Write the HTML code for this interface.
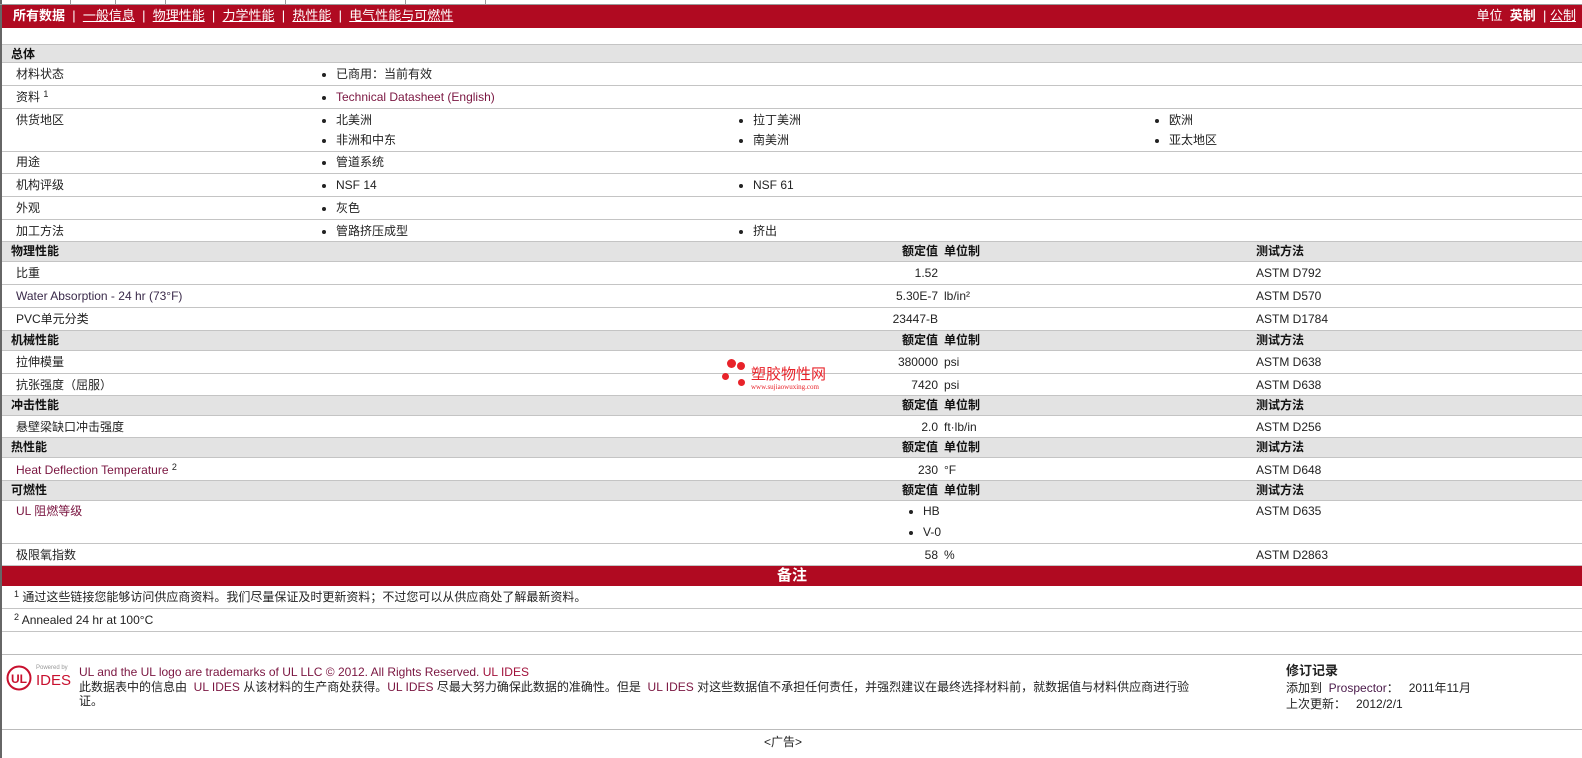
<!DOCTYPE html>
<html><head><meta charset="utf-8"><style>
*{margin:0;padding:0;box-sizing:border-box}
body{width:1582px;height:758px;background:#fff;position:relative;overflow:hidden;font:12px "Liberation Sans","Noto Sans CJK SC",sans-serif;color:#222}
.a{position:absolute}
.r{position:absolute;left:2px;right:0;border-bottom:1px solid #c4c4c4}
.h{background:#e3e3e3;font-weight:bold;color:#111}
.t{position:absolute;white-space:nowrap;line-height:14px}
.b::before{content:"";position:absolute;left:-14px;top:6px;width:4px;height:4px;border-radius:50%;background:#222}
.lk{color:#7a1540}
.v{position:absolute;right:644px;text-align:right;white-space:nowrap;line-height:14px}
sup{font-size:9px;vertical-align:top;position:relative;top:-3px}
</style></head><body>
<div class="a" style="left:0;top:0;width:2px;height:758px;background:#666"></div>
<div class="a" style="left:0;top:0;width:1582px;height:5px;border-bottom:1px solid #999"></div>
<div class="a" style="left:70px;top:0;width:1px;height:5px;background:#999"></div>
<div class="a" style="left:115px;top:0;width:1px;height:5px;background:#999"></div>
<div class="a" style="left:165px;top:0;width:1px;height:5px;background:#999"></div>
<div class="a" style="left:285px;top:0;width:1px;height:5px;background:#999"></div>
<div class="a" style="left:405px;top:0;width:1px;height:5px;background:#999"></div>
<div class="a" style="left:485px;top:0;width:1px;height:5px;background:#999"></div>
<div class="a" style="left:2px;top:5px;right:0;height:23px;background:#b00a21;color:#fff;font-size:13px">
<span class="t" style="left:11px;top:4px"><b>所有数据</b> &nbsp;| &nbsp;<u>一般信息</u> &nbsp;| &nbsp;<u>物理性能</u> &nbsp;| &nbsp;<u>力学性能</u> &nbsp;| &nbsp;<u>热性能</u> &nbsp;| &nbsp;<u>电气性能与可燃性</u></span>
<span class="t" style="right:6px;top:4px">单位 &nbsp;<b>英制</b> &nbsp;| <u>公制</u></span></div>

<div class="r h" style="top:44px;height:19px;border-top:1px solid #c4c4c4"><span class="t" style="left:9px;top:2px">总体</span></div>
<div class="r" style="top:63px;height:23px"><span class="t" style="left:14px;top:4px">材料状态</span><span class="t b" style="left:334px;top:4px">已商用：当前有效</span></div>
<div class="r" style="top:86px;height:23px"><span class="t" style="left:14px;top:4px">资料 <sup>1</sup></span><span class="t b lk" style="left:334px;top:4px">Technical Datasheet (English)</span></div>
<div class="r" style="top:109px;height:43px"><span class="t" style="left:14px;top:4px">供货地区</span>
<span class="t b" style="left:334px;top:4px">北美洲</span><span class="t b" style="left:751px;top:4px">拉丁美洲</span><span class="t b" style="left:1167px;top:4px">欧洲</span>
<span class="t b" style="left:334px;top:24px">非洲和中东</span><span class="t b" style="left:751px;top:24px">南美洲</span><span class="t b" style="left:1167px;top:24px">亚太地区</span></div>
<div class="r" style="top:152px;height:22px"><span class="t" style="left:14px;top:3px">用途</span><span class="t b" style="left:334px;top:3px">管道系统</span></div>
<div class="r" style="top:174px;height:23px"><span class="t" style="left:14px;top:4px">机构评级</span><span class="t b" style="left:334px;top:4px">NSF 14</span><span class="t b" style="left:751px;top:4px">NSF 61</span></div>
<div class="r" style="top:197px;height:23px"><span class="t" style="left:14px;top:4px">外观</span><span class="t b" style="left:334px;top:4px">灰色</span></div>
<div class="r" style="top:220px;height:22px"><span class="t" style="left:14px;top:4px">加工方法</span><span class="t b" style="left:334px;top:4px">管路挤压成型</span><span class="t b" style="left:751px;top:4px">挤出</span></div>

<div class="r h" style="top:242px;height:20px"><span class="t" style="left:9px;top:2px">物理性能</span><span class="v" style="top:2px">额定值</span><span class="t" style="left:942px;top:2px">单位制</span><span class="t" style="left:1254px;top:2px">测试方法</span></div>
<div class="r" style="top:262px;height:23px"><span class="t" style="left:14px;top:4px">比重</span><span class="v" style="top:4px">1.52</span><span class="t" style="left:1254px;top:4px">ASTM D792</span></div>
<div class="r" style="top:285px;height:23px"><span class="t" style="left:14px;top:4px;color:#3a2a4a">Water Absorption - 24 hr (73°F)</span><span class="v" style="top:4px">5.30E-7</span><span class="t" style="left:942px;top:4px">lb/in²</span><span class="t" style="left:1254px;top:4px">ASTM D570</span></div>
<div class="r" style="top:308px;height:23px"><span class="t" style="left:14px;top:4px">PVC单元分类</span><span class="v" style="top:4px">23447-B</span><span class="t" style="left:1254px;top:4px">ASTM D1784</span></div>

<div class="r h" style="top:331px;height:20px"><span class="t" style="left:9px;top:2px">机械性能</span><span class="v" style="top:2px">额定值</span><span class="t" style="left:942px;top:2px">单位制</span><span class="t" style="left:1254px;top:2px">测试方法</span></div>
<div class="r" style="top:351px;height:23px"><span class="t" style="left:14px;top:4px">拉伸模量</span><span class="v" style="top:4px">380000</span><span class="t" style="left:942px;top:4px">psi</span><span class="t" style="left:1254px;top:4px">ASTM D638</span></div>
<div class="r" style="top:374px;height:22px"><span class="t" style="left:14px;top:4px">抗张强度（屈服）</span><span class="v" style="top:4px">7420</span><span class="t" style="left:942px;top:4px">psi</span><span class="t" style="left:1254px;top:4px">ASTM D638</span></div>

<div class="r h" style="top:396px;height:20px"><span class="t" style="left:9px;top:2px">冲击性能</span><span class="v" style="top:2px">额定值</span><span class="t" style="left:942px;top:2px">单位制</span><span class="t" style="left:1254px;top:2px">测试方法</span></div>
<div class="r" style="top:416px;height:22px"><span class="t" style="left:14px;top:4px">悬壁梁缺口冲击强度</span><span class="v" style="top:4px">2.0</span><span class="t" style="left:942px;top:4px">ft·lb/in</span><span class="t" style="left:1254px;top:4px">ASTM D256</span></div>

<div class="r h" style="top:438px;height:20px"><span class="t" style="left:9px;top:2px">热性能</span><span class="v" style="top:2px">额定值</span><span class="t" style="left:942px;top:2px">单位制</span><span class="t" style="left:1254px;top:2px">测试方法</span></div>
<div class="r" style="top:458px;height:23px"><span class="t lk" style="left:14px;top:5px">Heat Deflection Temperature <sup style="color:#222">2</sup></span><span class="v" style="top:5px">230</span><span class="t" style="left:942px;top:5px">°F</span><span class="t" style="left:1254px;top:5px">ASTM D648</span></div>

<div class="r h" style="top:481px;height:20px"><span class="t" style="left:9px;top:2px">可燃性</span><span class="v" style="top:2px">额定值</span><span class="t" style="left:942px;top:2px">单位制</span><span class="t" style="left:1254px;top:2px">测试方法</span></div>
<div class="r" style="top:501px;height:43px"><span class="t lk" style="left:14px;top:3px">UL 阻燃等级</span><span class="t b" style="left:921px;top:3px">HB</span><span class="t b" style="left:921px;top:24px">V-0</span><span class="t" style="left:1254px;top:3px">ASTM D635</span></div>
<div class="r" style="top:544px;height:22px"><span class="t" style="left:14px;top:4px">极限氧指数</span><span class="v" style="top:4px">58</span><span class="t" style="left:942px;top:4px">%</span><span class="t" style="left:1254px;top:4px">ASTM D2863</span></div>

<div class="a" style="left:2px;right:0;top:566px;height:20px;background:#b00a21;color:#fff;font-weight:bold;font-size:15px;text-align:center;line-height:20px">备注</div>
<div class="r" style="top:586px;height:23px"><span class="t" style="left:12px;top:4px"><sup>1</sup> 通过这些链接您能够访问供应商资料。我们尽量保证及时更新资料；不过您可以从供应商处了解最新资料。</span></div>
<div class="r" style="top:609px;height:23px"><span class="t" style="left:12px;top:4px"><sup>2</sup> Annealed 24 hr at 100°C</span></div>

<!-- watermark -->
<div class="a" style="left:727px;top:359px;width:9px;height:9px;border-radius:50%;background:#e8232a"></div>
<div class="a" style="left:737px;top:362px;width:8px;height:8px;border-radius:50%;background:#e8232a"></div>
<div class="a" style="left:722px;top:373px;width:7px;height:7px;border-radius:50%;background:#e8232a"></div>
<div class="a" style="left:738px;top:379px;width:7px;height:7px;border-radius:50%;background:#e8232a"></div>
<span class="t" style="left:751px;top:367px;font-size:15px;line-height:16px;color:#e8232a">塑胶物性网</span>
<span class="t" style="left:751px;top:383px;font-size:7px;line-height:8px;color:#e8232a;font-family:'Liberation Serif',serif">www.sujiaowuxing.com</span>

<div class="a" style="left:2px;right:0;top:654px;border-top:1px solid #bbb"></div>
<svg class="a" style="left:6px;top:665px" width="26" height="26" viewBox="0 0 26 26"><circle cx="13" cy="13" r="11.5" fill="none" stroke="#c8102e" stroke-width="2"/><text x="13" y="18" text-anchor="middle" font-family="Liberation Sans" font-weight="bold" font-size="12" fill="#c8102e">UL</text></svg>
<span class="t" style="left:36px;top:665px;font-size:6px;color:#999;line-height:7px">Powered by</span>
<span class="t" style="left:36px;top:672px;font-size:15px;color:#c8102e;line-height:18px">IDES</span>
<span class="t" style="left:79px;top:665px"><span class="lk">UL and the UL logo are trademarks of UL LLC © 2012. All Rights Reserved.</span> <span style="color:#a0103a">UL IDES</span></span>
<span class="t" style="left:79px;top:680px">此数据表中的信息由 &nbsp;<span class="lk">UL IDES</span> 从该材料的生产商处获得。<span class="lk">UL IDES</span> 尽最大努力确保此数据的准确性。但是 &nbsp;<span class="lk">UL IDES</span> 对这些数据值不承担任何责任，并强烈建议在最终选择材料前，就数据值与材料供应商进行验</span>
<span class="t" style="left:79px;top:694px">证。</span>
<span class="t" style="left:1286px;top:664px;font-weight:bold;font-size:13px">修订记录</span>
<span class="t" style="left:1286px;top:681px">添加到 &nbsp;<span style="color:#4a1a4a">Prospector</span>： &nbsp; 2011年11月</span>
<span class="t" style="left:1286px;top:697px">上次更新： &nbsp; 2012/2/1</span>
<div class="a" style="left:2px;right:0;top:729px;border-top:1px solid #bbb"></div>
<span class="t" style="left:764px;top:735px">&lt;广告&gt;</span>
</body></html>
